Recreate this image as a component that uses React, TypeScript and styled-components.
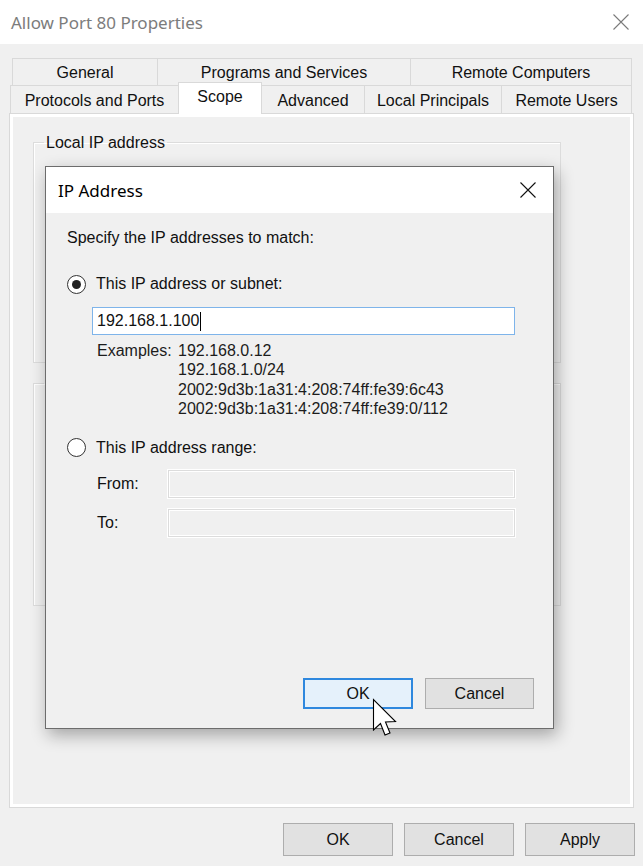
import React from "react";
import styled, { createGlobalStyle } from "styled-components";

const GlobalStyle = createGlobalStyle`
  html, body {
    margin: 0;
    padding: 0;
    background: #f0f0f0;
  }
  body {
    font-family: "Liberation Sans", Arial, sans-serif;
  }
`;

const Window = styled.div`
  position: relative;
  width: 643px;
  height: 866px;
  background: #f0f0f0;
  overflow: hidden;
  font-family: "Liberation Sans", Arial, sans-serif;
  font-size: 16px;
  color: #111;
`;

const TitleBar = styled.div<{ $h: number; $pl: number; $pr: number }>`
  height: ${(p) => p.$h}px;
  flex-shrink: 0;
  background: #fff;
  display: flex;
  align-items: center;
  justify-content: space-between;
  padding: 0 ${(p) => p.$pr}px 0 ${(p) => p.$pl}px;
  box-sizing: border-box;
`;

const Title = styled.span<{ $inactive?: boolean }>`
  font-family: "Noto Sans", "Open Sans", sans-serif;
  font-size: 17px;
  color: ${(p) => (p.$inactive ? "#7c7c7c" : "#000")};
`;

const Body = styled.div`
  padding: 14px 9px 0 9px;
`;

const TabStrip = styled.div`
  display: flex;
  flex-direction: column;
`;

const TabRow = styled.div<{ $indent: number; $h: number }>`
  display: flex;
  align-items: flex-end;
  height: ${(p) => p.$h}px;
  padding-left: ${(p) => p.$indent}px;
`;

const Tab = styled.div<{ $w: number; $active?: boolean }>`
  width: ${(p) => p.$w}px;
  height: ${(p) => (p.$active ? "calc(100% + 4px)" : "100%")};
  margin-bottom: ${(p) => (p.$active ? "-1px" : "0")};
  box-sizing: border-box;
  border: 1px solid #d9d9d9;
  border-bottom: none;
  margin-left: -1px;
  background: ${(p) => (p.$active ? "#fff" : "#f0f0f0")};
  position: relative;
  z-index: ${(p) => (p.$active ? 2 : 1)};
  display: flex;
  align-items: center;
  justify-content: center;
  padding-top: ${(p) => (p.$active ? "0" : "2px")};
  padding-bottom: ${(p) => (p.$active ? "4px" : "0")};
  white-space: nowrap;
`;

const TabPanel = styled.div`
  height: 695px;
  box-sizing: border-box;
  border: 1px solid #d9d9d9;
  box-shadow: inset 0 0 0 3px #fff;
  padding: 19px 0 0 23px;
  display: flex;
  flex-direction: column;
  gap: 11px;
`;

const GroupBox = styled.fieldset<{ $h: number }>`
  margin: 0;
  width: 528px;
  height: ${(p) => p.$h}px;
  box-sizing: border-box;
  border: 1px solid #dcdcdc;
  box-shadow: inset 1px 1px 0 #fff;
  padding: 0 10px;

  legend {
    padding: 0 2px;
    font-size: 16px;
    line-height: 19px;
  }
`;

const Footer = styled.div`
  display: flex;
  justify-content: flex-end;
  gap: 11px;
  margin-top: 15px;
  margin-right: -1px;
`;

const Button = styled.div<{ $w: number; $h: number; $default?: boolean }>`
  width: ${(p) => p.$w}px;
  height: ${(p) => p.$h}px;
  box-sizing: border-box;
  display: flex;
  align-items: center;
  justify-content: center;
  background: ${(p) => (p.$default ? "#e5f1fb" : "#e1e1e1")};
  border: ${(p) => (p.$default ? "2px solid #2f88de" : "1px solid #adadad")};
  font-size: 16px;
  color: #111;
`;

const Dialog = styled.div`
  position: absolute;
  left: 45px;
  top: 166px;
  width: 509px;
  height: 563px;
  box-sizing: border-box;
  border: 1px solid #6c6c6c;
  background: #f0f0f0;
  box-shadow: 3px 6px 16px rgba(0, 0, 0, 0.32);
  display: flex;
  flex-direction: column;
  z-index: 10;
`;

const DialogContent = styled.div`
  flex: 1;
  display: flex;
  flex-direction: column;
  padding: 15px 19px 19px 21px;
`;

const Line = styled.div`
  line-height: 19px;
`;

const RadioRow = styled.div<{ $mt: number }>`
  display: flex;
  align-items: center;
  gap: 10px;
  height: 20px;
  margin-top: ${(p) => p.$mt}px;
`;

const Radio = styled.span<{ $checked?: boolean }>`
  width: 19px;
  height: 19px;
  border-radius: 50%;
  border: 1.5px solid #333;
  background: #fff;
  box-sizing: border-box;
  display: inline-flex;
  align-items: center;
  justify-content: center;

  &::after {
    content: "";
    width: 9px;
    height: 9px;
    border-radius: 50%;
    background: #222;
    display: ${(p) => (p.$checked ? "block" : "none")};
  }
`;

const TextBox = styled.div<{ $w: number; $disabled?: boolean }>`
  width: ${(p) => p.$w}px;
  height: 28px;
  box-sizing: border-box;
  display: flex;
  align-items: center;
  padding-left: 4px;
  background: ${(p) => (p.$disabled ? "#f0f0f0" : "#fff")};
  border: 1px solid ${(p) => (p.$disabled ? "#dcdcdc" : "#7eb4ea")};
  box-shadow: ${(p) => (p.$disabled ? "0 0 0 1px #fff, inset 0 0 0 1px #fff" : "none")};
`;

const Caret = styled.span`
  width: 1px;
  height: 19px;
  background: #000;
  margin-left: 1px;
`;

const Indented = styled.div<{ $ml: number; $mt: number }>`
  margin-left: ${(p) => p.$ml}px;
  margin-top: ${(p) => p.$mt}px;
`;

const Examples = styled.div`
  display: grid;
  grid-template-columns: 81px auto;
  line-height: 19.4px;
  margin-left: 30px;
  margin-top: 6px;
  color: #1c1c1c;
`;

const FieldRow = styled.div<{ $mt: number }>`
  display: flex;
  align-items: center;
  margin-left: 30px;
  margin-top: ${(p) => p.$mt}px;
`;

const FieldLabel = styled.span`
  width: 71px;
`;

const DialogButtons = styled.div`
  margin-top: auto;
  display: flex;
  justify-content: flex-end;
  gap: 12px;
`;

const Cursor = styled.svg`
  position: absolute;
  left: 373px;
  top: 699px;
  z-index: 20;
  overflow: visible;
`;

const CloseIcon = ({ color, size }: { color: string; size: number }) => (
  <svg width={size} height={size} viewBox={`0 0 ${size} ${size}`}>
    <path
      d={`M0.5 0.5 L${size - 0.5} ${size - 0.5} M${size - 0.5} 0.5 L0.5 ${size - 0.5}`}
      stroke={color}
      strokeWidth={1.1}
      fill="none"
    />
  </svg>
);

const topTabs = [
  { label: "General", w: 146 },
  { label: "Programs and Services", w: 254 },
  { label: "Remote Computers", w: 222 },
];

const bottomTabs = [
  { label: "Protocols and Ports", w: 169 },
  { label: "Scope", w: 84, active: true },
  { label: "Advanced", w: 104 },
  { label: "Local Principals", w: 138 },
  { label: "Remote Users", w: 131 },
];

const examples = [
  "192.168.0.12",
  "192.168.1.0/24",
  "2002:9d3b:1a31:4:208:74ff:fe39:6c43",
  "2002:9d3b:1a31:4:208:74ff:fe39:0/112",
];

const App = () => {
  return (
    <Window>
      <GlobalStyle />
      <TitleBar $h={44} $pl={11} $pr={14}>
        <Title $inactive>Allow Port 80 Properties</Title>
        <CloseIcon color="#7a7a7a" size={16} />
      </TitleBar>
      <Body>
        <TabStrip>
          <TabRow $indent={4} $h={27}>
            {topTabs.map((t) => (
              <Tab key={t.label} $w={t.w}>
                {t.label}
              </Tab>
            ))}
          </TabRow>
          <TabRow $indent={2} $h={28}>
            {bottomTabs.map((t) => (
              <Tab key={t.label} $w={t.w} $active={t.active}>
                {t.label}
              </Tab>
            ))}
          </TabRow>
        </TabStrip>
        <TabPanel>
          <GroupBox $h={230}>
            <legend>Local IP address</legend>
          </GroupBox>
          <GroupBox $h={232}>
            <legend>Remote IP address</legend>
          </GroupBox>
        </TabPanel>
        <Footer>
          <Button $w={110} $h={33}>OK</Button>
          <Button $w={110} $h={33}>Cancel</Button>
          <Button $w={110} $h={33}>Apply</Button>
        </Footer>
      </Body>

      <Dialog>
        <TitleBar $h={46} $pl={12} $pr={17}>
          <Title>IP Address</Title>
          <CloseIcon color="#111" size={16} />
        </TitleBar>
        <DialogContent>
          <Line>Specify the IP addresses to match:</Line>
          <RadioRow $mt={27}>
            <Radio $checked />
            <span>This IP address or subnet:</span>
          </RadioRow>
          <Indented $ml={25} $mt={13}>
            <TextBox $w={423}>
              192.168.1.100
              <Caret />
            </TextBox>
          </Indented>
          <Examples>
            <span>Examples:</span>
            <span>{examples[0]}</span>
            {examples.slice(1).map((e) => (
              <React.Fragment key={e}>
                <span />
                <span>{e}</span>
              </React.Fragment>
            ))}
          </Examples>
          <RadioRow $mt={19}>
            <Radio />
            <span>This IP address range:</span>
          </RadioRow>
          <FieldRow $mt={12}>
            <FieldLabel>From:</FieldLabel>
            <TextBox $w={347} $disabled />
          </FieldRow>
          <FieldRow $mt={11}>
            <FieldLabel>To:</FieldLabel>
            <TextBox $w={347} $disabled />
          </FieldRow>
          <DialogButtons>
            <Button $w={110} $h={31} $default>OK</Button>
            <Button $w={109} $h={31}>Cancel</Button>
          </DialogButtons>
        </DialogContent>
      </Dialog>

      <Cursor width="24" height="38" viewBox="0 0 24 38">
        <path
          d="M0.5 0.5 L0.5 31 L7.5 24.5 L12 36 L17 34 L12.5 23 L22.5 22.5 Z"
          fill="#fff"
          stroke="#000"
          strokeWidth="1.1"
          strokeLinejoin="miter"
        />
      </Cursor>
    </Window>
  );
};

export default App;
